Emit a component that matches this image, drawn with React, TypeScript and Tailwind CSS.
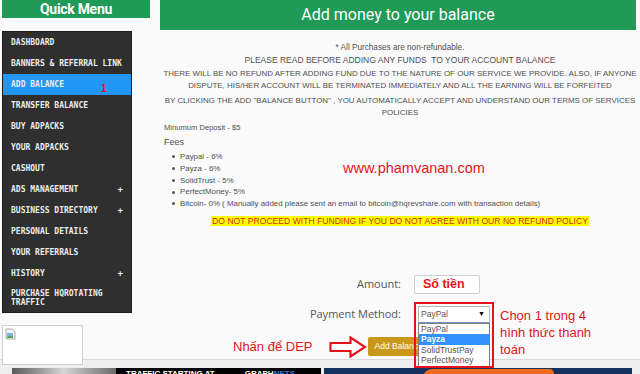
import React from "react";

type MenuItem = { lines: string[]; plus?: boolean; active?: boolean };

const MENU: MenuItem[] = [
  { lines: ["DASHBOARD"] },
  { lines: ["BANNERS & REFERRAL LINK"] },
  { lines: ["ADD BALANCE"], active: true },
  { lines: ["TRANSFER BALANCE"] },
  { lines: ["BUY ADPACKS"] },
  { lines: ["YOUR ADPACKS"] },
  { lines: ["CASHOUT"] },
  { lines: ["ADS MANAGEMENT"], plus: true },
  { lines: ["BUSINESS DIRECTORY"], plus: true },
  { lines: ["PERSONAL DETAILS"] },
  { lines: ["YOUR REFERRALS"] },
  { lines: ["HISTORY"], plus: true },
  { lines: ["PURCHASE HQROTATING", "TRAFFIC"] },
];

const FEES = [
  "Paypal - 6%",
  "Payza - 6%",
  "SolidTrust - 5%",
  "PerfectMoney- 5%",
  "Bitcoin- 0% ( Manually added please sent an email to bitcoin@hqrevshare.com with transaction details)",
];

const METHODS = ["PayPal", "Payza", "SolidTrustPay", "PerfectMoney"];

function BrokenImage() {
  return (
    <svg width="11" height="12" viewBox="0 0 11 12">
      <path d="M1 1h6l3 3v7H1z" fill="#f4f4f4" stroke="#9a9a9a" strokeWidth="0.8" />
      <rect x="2" y="5" width="6" height="5" fill="#7fb3e6" />
      <path d="M2 10l2.5-3 2 2 1.5-1.5V10z" fill="#5aa34a" />
    </svg>
  );
}

function OutlineArrow() {
  return (
    <svg width="38" height="22" viewBox="0 0 38 22">
      <path
        d="M1.5 7h20V1.5L36 11 21.5 20.5V15h-20z"
        fill="#fff"
        stroke="#e3141b"
        strokeWidth="2.2"
      />
    </svg>
  );
}

export default function App() {
  return (
    <div className="relative w-[640px] h-[374px] overflow-hidden bg-[#fafafa] font-['Liberation_Sans',Arial,sans-serif]">
      <div className="flex h-[359px]">
        {/* Sidebar */}
        <aside className="w-[160px] shrink-0 pl-[2px]">
          <div className="w-[148px] h-[18px] bg-[#1f9a57] text-white text-center font-['Roboto',sans-serif] font-bold text-[14px] leading-[18px] tracking-[-0.3px]">
            Quick Menu
          </div>
          <ul className="mt-[13px] w-[130px] bg-[#2f2f2f] border border-[#1d1d1d] font-['DejaVu_Sans_Mono',monospace] font-bold text-[8px] text-[#ececec]">
            {MENU.map((item) => (
              <li
                key={item.lines[0]}
                className={`relative flex items-center justify-between pl-[8px] pr-[8px] ${
                  item.lines.length > 1 ? "h-[28px] leading-[9px]" : "h-[21px]"
                } ${item.active ? "bg-[#2196f3]" : ""}`}
              >
                <span>
                  {item.lines.map((l) => (
                    <span key={l} className="block">
                      {l}
                    </span>
                  ))}
                </span>
                {item.plus && <span className="text-[9px]">+</span>}
                {item.active && (
                  <span className="absolute left-[98px] top-[7px] text-[#e3141b] font-['Liberation_Sans',sans-serif] text-[10px] font-bold">
                    1
                  </span>
                )}
              </li>
            ))}
          </ul>
          <div className="mt-[12px] w-[81px] h-[40px] border border-[#d0d0d0] bg-white pl-[2px] pt-[2px]">
            <BrokenImage />
          </div>
        </aside>

        {/* Content */}
        <main className="relative w-[480px] text-[#505050]">
          <div className="mr-[4px] h-[30px] bg-[#1f9a57] text-white text-center font-['Roboto',sans-serif] text-[16px] leading-[30px]">
            Add money to your balance
          </div>

          <div className="mt-[12px] text-center leading-[12px] whitespace-nowrap">
            <p className="text-[8.2px]">* All Purchases are non-refundable.</p>
            <p className="text-[8.5px]">PLEASE READ BEFORE ADDING ANY FUNDS&nbsp; TO YOUR ACCOUNT BALANCE</p>
            <p className="mt-[2px] text-[7.95px]">
              THERE WILL BE NO REFUND AFTER ADDING FUND DUE TO THE NATURE OF OUR SERVICE WE PROVIDE. ALSO, IF ANYONE
              <br />
              DISPUTE, HIS/HER ACCOUNT WILL BE TERMINATED IMMEDIATELY AND ALL THE EARNING WILL BE FORFEITED
            </p>
            <p className="mt-[3px] text-[7.95px]">
              BY CLICKING THE ADD &quot;BALANCE BUTTON&quot; , YOU AUTOMATICALLY ACCEPT AND UNDERSTAND OUR TERMS OF SERVICES
              <br />
              POLICIES
            </p>
          </div>

          <div className="pl-[4px] mt-[3px] leading-[12px]">
            <p className="text-[7.6px]">Minumum Deposit - $5</p>
            <p className="mt-[2px] text-[9px]">Fees</p>
          </div>
          <ul className="mt-[3px] pl-[12px] text-[7.9px] leading-[11.75px] whitespace-nowrap">
            {FEES.map((f) => (
              <li key={f} className="flex items-center gap-[5px]">
                <span className="w-[3px] h-[3px] rounded-full bg-[#555]" />
                {f}
              </li>
            ))}
          </ul>

          <div className="mt-[6px] flex justify-center">
            <span className="bg-[#ffff00] px-[1px] text-[#cc2a12] text-[8.6px] leading-[10px] whitespace-nowrap">
              DO NOT PROCEED WITH FUNDING IF YOU DO NOT AGREE WITH OUR NO REFUND POLICY
            </span>
          </div>

          {/* Form */}
          <div className="mt-[49px] flex items-center font-['Open_Sans',sans-serif] text-[11px] text-[#555]">
            <label className="w-[241px] text-right">Amount:</label>
            <div className="ml-[13px] w-[66px] h-[19px] bg-white border border-[#cfcfcf] rounded-[2px] pl-[8px] text-[#e3141b] font-['Liberation_Sans',sans-serif] font-bold text-[12.5px] leading-[17px]">
              Số tiền
            </div>
          </div>

          <div className="mt-[12px] flex items-center font-['Open_Sans',sans-serif] text-[11px] text-[#555]">
            <label className="w-[241px] text-right">Payment Method:</label>
            <div className="relative ml-[17px] w-[72px] h-[17px] bg-white border border-[#b5b5b5] border-b-[#6f95d0] flex items-center justify-between pl-[2px] pr-[4px] font-['Liberation_Sans',sans-serif] text-[8.5px] text-[#555]">
              <span>PayPal</span>
              <span className="text-[7px] text-black">▼</span>
              <div className="absolute z-20 left-[-5px] top-[-5px] w-[80px] h-[66px] border-2 border-[#e3141b]" />
              <ul className="absolute z-10 left-[-1px] top-[16px] w-[72px] bg-white border border-[#7d7d7d] leading-[10.5px]">
                {METHODS.map((m) => (
                  <li key={m} className={`px-[2px] ${m === "Payza" ? "bg-[#3392ff] text-white font-bold" : ""}`}>
                    {m}
                  </li>
                ))}
              </ul>
            </div>
          </div>

          <div className="mt-[13px] flex items-center pl-[73px]">
            <span className="text-[#e3141b] text-[13px] leading-[16px]">Nhấn để DEP</span>
            <span className="ml-[16px]">
              <OutlineArrow />
            </span>
            <button className="ml-[1px] h-[19px] w-[60px] bg-[#c9971c] rounded-[2px] text-white text-[8.5px] text-left pl-[7px]">
              Add Balance
            </button>
          </div>

          {/* Overlays */}
          <span className="absolute left-[183px] top-[160px] text-[#e8141b] text-[14.5px] leading-[16px]">
            www.phamvanan.com
          </span>
          <div className="absolute left-[340px] top-[307px] text-[#e3141b] text-[13px] leading-[17px]">
            Chọn 1 trong 4
            <br />
            hình thức thanh
            <br />
            toán
          </div>
        </main>
      </div>

      {/* Footer banners */}
      <div className="h-[15px] border-t border-[#dcdcdc] bg-[#eeeeee] flex pl-[12px] pt-[8px] gap-[3px]">
        <div className="w-[309px] h-[20px] flex">
          <div className="w-[104px] bg-gradient-to-r from-[#5a5a5a] via-[#d6d6d6] to-[#6a6a6a]" />
          <div className="flex-1 bg-black flex gap-[30px] pl-[10px] text-white font-bold text-[8px] leading-[10px] pt-[1px] whitespace-nowrap">
            <span>TRAFFIC STARTING AT</span>
            <span>
              GRAPH<span className="text-[#3b7de0]">NETS</span>
            </span>
          </div>
        </div>
        <div className="relative w-[308px] h-[20px] bg-[#14305c] overflow-hidden">
          <div className="absolute left-[98px] top-[1px] w-[130px] h-[20px] bg-[#f26a1b] -skew-x-[20deg] rounded-t-[6px]" />
        </div>
      </div>
    </div>
  );
}
